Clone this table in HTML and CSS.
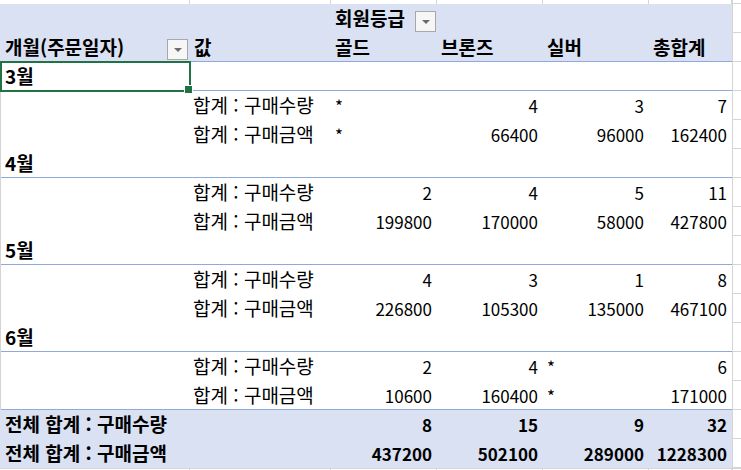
FILE: index.html
```html
<!DOCTYPE html>
<html lang="ko">
<head>
<meta charset="utf-8">
<title>피벗 테이블</title>
<link rel="stylesheet" href="styles.css">
</head>
<body>
<div class="sheet">
  <div class="row strip">
    <div class="c"></div><div class="c"></div><div class="c"></div><div class="c"></div><div class="c"></div><div class="c"></div><div class="c end"></div>
  </div>
  <div class="row fill">
    <div class="c"></div><div class="c"></div>
    <div class="c b">회원등급<span class="dd dd-top"></span></div>
    <div class="c"></div><div class="c"></div><div class="c"></div><div class="c edge"></div>
  </div>
  <div class="row fill sep">
    <div class="c b">개월(주문일자)<span class="dd dd-a"></span></div>
    <div class="c b">값</div>
    <div class="c b">골드</div>
    <div class="c b">브론즈</div>
    <div class="c b">실버</div>
    <div class="c b">총합계</div>
    <div class="c edge"></div>
  </div>
  <div class="row w sep">
    <div class="c a b sel">3월</div><div class="c"></div><div class="c"></div><div class="c"></div><div class="c"></div><div class="c"></div><div class="c edge"></div>
  </div>
  <div class="row w">
    <div class="c a"></div><div class="c lbl">합계 : 구매수량</div><div class="c ast">*</div><div class="c num">4</div><div class="c num">3</div><div class="c num">7</div><div class="c edge"></div>
  </div>
  <div class="row w">
    <div class="c a"></div><div class="c lbl">합계 : 구매금액</div><div class="c ast">*</div><div class="c num">66400</div><div class="c num">96000</div><div class="c num">162400</div><div class="c edge"></div>
  </div>
  <div class="row w sep">
    <div class="c a b">4월</div><div class="c"></div><div class="c"></div><div class="c"></div><div class="c"></div><div class="c"></div><div class="c edge"></div>
  </div>
  <div class="row w">
    <div class="c a"></div><div class="c lbl">합계 : 구매수량</div><div class="c num">2</div><div class="c num">4</div><div class="c num">5</div><div class="c num">11</div><div class="c edge"></div>
  </div>
  <div class="row w">
    <div class="c a"></div><div class="c lbl">합계 : 구매금액</div><div class="c num">199800</div><div class="c num">170000</div><div class="c num">58000</div><div class="c num">427800</div><div class="c edge"></div>
  </div>
  <div class="row w sep">
    <div class="c a b">5월</div><div class="c"></div><div class="c"></div><div class="c"></div><div class="c"></div><div class="c"></div><div class="c edge"></div>
  </div>
  <div class="row w">
    <div class="c a"></div><div class="c lbl">합계 : 구매수량</div><div class="c num">4</div><div class="c num">3</div><div class="c num">1</div><div class="c num">8</div><div class="c edge"></div>
  </div>
  <div class="row w">
    <div class="c a"></div><div class="c lbl">합계 : 구매금액</div><div class="c num">226800</div><div class="c num">105300</div><div class="c num">135000</div><div class="c num">467100</div><div class="c edge"></div>
  </div>
  <div class="row w sep">
    <div class="c a b">6월</div><div class="c"></div><div class="c"></div><div class="c"></div><div class="c"></div><div class="c"></div><div class="c edge"></div>
  </div>
  <div class="row w">
    <div class="c a"></div><div class="c lbl">합계 : 구매수량</div><div class="c num">2</div><div class="c num">4</div><div class="c ast">*</div><div class="c num">6</div><div class="c edge"></div>
  </div>
  <div class="row w sep">
    <div class="c a"></div><div class="c lbl">합계 : 구매금액</div><div class="c num">10600</div><div class="c num">160400</div><div class="c ast">*</div><div class="c num">171000</div><div class="c edge"></div>
  </div>
  <div class="row fill">
    <div class="c b">전체 합계 : 구매수량</div><div class="c"></div><div class="c num b">8</div><div class="c num b">15</div><div class="c num b">9</div><div class="c num b">32</div><div class="c edge"></div>
  </div>
  <div class="row fill">
    <div class="c b">전체 합계 : 구매금액</div><div class="c"></div><div class="c num b">437200</div><div class="c num b">502100</div><div class="c num b">289000</div><div class="c num b">1228300</div><div class="c edge"></div>
  </div>
  <div class="row strip bottom">
    <div class="c"></div><div class="c"></div><div class="c"></div><div class="c"></div><div class="c"></div><div class="c"></div><div class="c end"></div>
  </div>
</div>
</body>
</html>
```

FILE: styles.css
```css
* {
  box-sizing: border-box;
  margin: 0;
  padding: 0;
}

html, body {
  background: #ffffff;
}

body {
  margin: 0;
  width: 741px;
  height: 470px;
  overflow: hidden;
  font-family: "Noto Sans CJK KR", "Noto Sans", sans-serif;
  font-size: 19px;
  color: #000000;
}

.sheet {
  display: flex;
  flex-direction: column;
}

.row {
  display: grid;
  grid-template-columns: 190px 141px 106px 106px 106px 83px 9px;
  height: 29px;
  flex: none;
}

.c {
  display: flex;
  align-items: flex-end;
  padding: 0 5px 7px 4px;
  line-height: 17px;
  white-space: nowrap;
  position: relative;
}

.row > .c:first-child {
  padding-left: 5px;
}

.lbl {
  padding-left: 3px;
}

.num,
.ast {
  font-size: 17px;
  padding-bottom: 6px;
}

.num {
  justify-content: flex-end;
}

.b {
  font-weight: bold;
}

.fill .c {
  background: #d9e1f2;
}

.fill .c.edge {
  background: #ffffff;
}

.sep .c {
  box-shadow: inset 0 -1px 0 #8ea9db;
}

.w .c.a {
  box-shadow: inset 1px 0 0 #d4d4d4;
}

.w.sep .c.a {
  box-shadow: inset 1px 0 0 #d4d4d4, inset 0 -1px 0 #8ea9db;
}

.c.edge {
  border-left: 1px solid #d4d4d4;
  box-shadow: inset 0 -1px 0 #d4d4d4;
}

/* thin strips at top and bottom showing worksheet gridlines */
.strip {
  height: 4px;
}

.strip .c {
  padding: 0;
  box-shadow: inset -1px 0 0 #d4d4d4;
}

.strip .c.end {
  box-shadow: inset 1px 0 0 #d4d4d4, inset 0 -1px 0 #d4d4d4;
}

.strip.bottom {
  height: 2px;
}

.strip.bottom .c {
  box-shadow: inset -1px 0 0 #d4d4d4, inset 0 1px 0 #d4d4d4;
}

.strip.bottom .c.end {
  box-shadow: inset 1px 0 0 #d4d4d4, inset 0 1px 0 #d4d4d4;
}

/* filter dropdown buttons */
.dd {
  flex: none;
  width: 21px;
  height: 21px;
  margin-left: auto;
  border: 1px solid #a8a8a8;
  background: #f6f6f6;
  display: flex;
  align-items: center;
  justify-content: center;
}

.dd::after {
  content: "";
  width: 0;
  height: 0;
  border-left: 4px solid transparent;
  border-right: 4px solid transparent;
  border-top: 4px solid #6b6b6b;
  margin-top: 1px;
}

.dd-top {
  margin-right: -4px;
  margin-bottom: -6px;
}

.dd-a {
  margin-right: -3px;
  margin-bottom: -5px;
}

/* selected cell */
.sel {
  z-index: 2;
}

.sel::after {
  content: "";
  position: absolute;
  left: 0;
  top: -1px;
  right: -1px;
  bottom: -1px;
  border: 2px solid #217346;
}

.sel::before {
  content: "";
  position: absolute;
  right: -3px;
  bottom: -3px;
  width: 7px;
  height: 7px;
  background: #217346;
  border: 1px solid #ffffff;
  z-index: 3;
}
```
